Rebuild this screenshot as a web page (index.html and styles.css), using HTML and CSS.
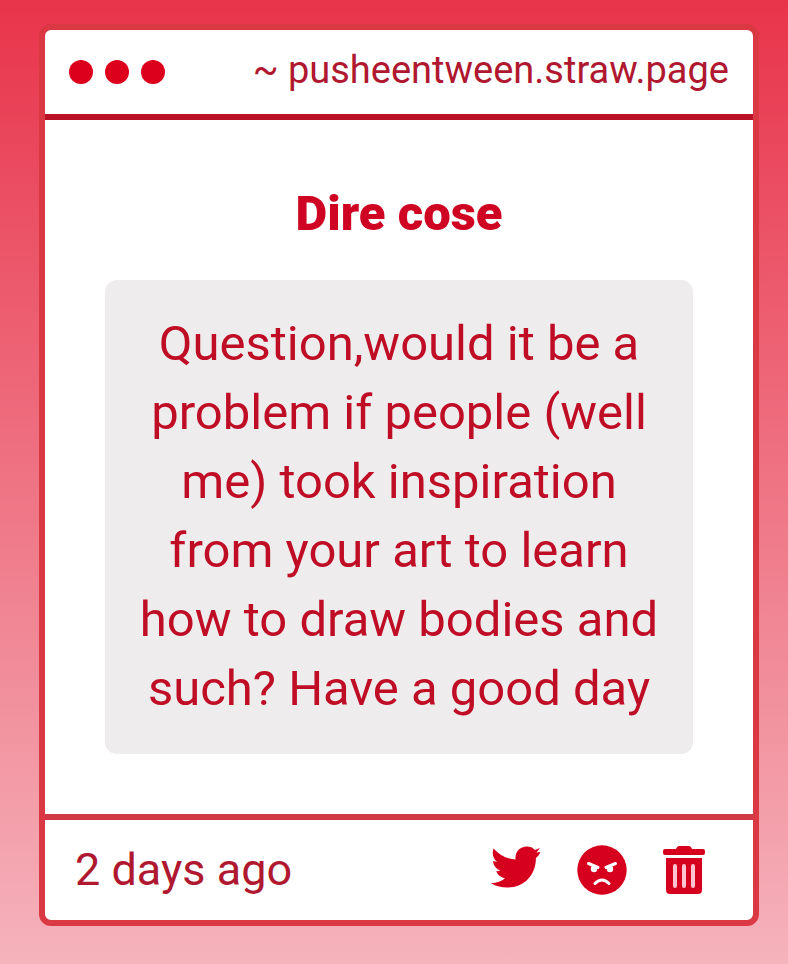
FILE: index.html
```html
<!DOCTYPE html>
<html lang="it">
<head>
    <meta charset="UTF-8">
    <meta name="viewport" content="width=device-width, initial-scale=1.0">
    <title>pusheentween.straw.page</title>
    <link rel="stylesheet" href="styles.css">
</head>
<body>
    <main class="card">
        <header class="topbar">
            <div class="dots"><span></span><span></span><span></span></div>
            <a class="site" href="#">~ pusheentween.straw.page</a>
        </header>
        <section class="content">
            <h1>Dire cose</h1>
            <p class="message">Question,would it be a problem if people (well me) took inspiration from your art to learn how to draw bodies and such? Have a good day</p>
        </section>
        <footer class="bottombar">
            <time>2 days ago</time>
            <div class="actions">
                <button type="button" aria-label="Twitter">
                    <svg viewBox="0 0 50 48" width="50" height="48"><path d="M49.500 6l-4 .5 3.500-4.500-5 2C41.500 1.500 39.500.5 36 .5 28.500.5 24 6 24.500 13.500 15.800 13 8.400 9 2.500 2.500c-1.600 5-.6 9.800 3.600 13.500L2 15c.3 4.600 3.500 8.200 7.500 9.800l-4.300.4c1.500 4 4.800 6.500 8.900 7.100C10.500 35.500 6 37 0 37.200 5 40.300 10.500 41.500 16.500 41.500 33 41.500 45 29 44.900 12c2-1.500 3.500-3.400 4.600-6z"/></svg>
                </button>
                <button type="button" aria-label="Block">
                    <svg viewBox="0 0 50 50" width="50" height="50"><circle cx="25" cy="25" r="24.700"/><path class="face" d="M11.500 18.500l9.500 4M38.500 18.500l-9.500 4M18 38.500q7-7 14 0"/><circle class="eye" cx="17" cy="24" r="3.200"/><circle class="eye" cx="33" cy="24" r="3.200"/></svg>
                </button>
                <button type="button" aria-label="Delete">
                    <svg viewBox="0 0 42 48" width="42" height="48"><path d="M16 0h10q2 0 3 3h11q2 0 2 2v2q0 2-2 2H2Q0 9 0 7V5q0-2 2-2h11q1-3 3-3zM3 12h36v32q0 4-4 4H7q-4 0-4-4z"/><path class="bars" d="M12 20v20M21 20v20M30 20v20"/></svg>
                </button>
            </div>
        </footer>
    </main>
</body>
</html>
```

FILE: styles.css
```css
* {
    box-sizing: border-box;
}
body {
    margin: 0;
    min-height: 100vh;
    padding: 24px 29px 38px 39px;
    background: linear-gradient(#e8344b, #f5b3bc);
    color: #c00d26;
    font-family: Roboto, "Liberation Sans", sans-serif;
}
.card {
    background: #fff;
    border: 6px solid #da3843;
    border-radius: 12px;
}
.topbar {
    display: flex;
    justify-content: space-between;
    align-items: center;
    height: 90px;
    padding: 0 24px;
    border-bottom: 6px solid #b91227;
}
.dots {
    display: flex;
    gap: 12px;
}
.dots span {
    width: 24px;
    height: 24px;
    border-radius: 50%;
    background: #dc001c;
}
.site {
    padding-bottom: 4px;
    color: #b01830;
    font-size: 38px;
    text-decoration: none;
}
.content {
    padding: 60px;
    text-align: center;
}
h1 {
    margin: 0 0 32px;
    color: #cf0322;
    font-size: 49px;
    font-weight: 900;
    line-height: 68px;
}
.message {
    margin: 0;
    padding: 29px 32px 31px;
    border-radius: 12px;
    background: #eeeced;
    font-size: 49px;
    line-height: 69px;
}
.bottombar {
    display: flex;
    justify-content: space-between;
    align-items: center;
    height: 106px;
    padding: 0 48px 0 30px;
    border-top: 6px solid #d23a48;
    color: #b01830;
    font-size: 45px;
}
.bottombar time {
    padding-bottom: 2px;
}
.actions {
    display: flex;
    align-items: center;
    gap: 36px;
}
button {
    display: flex;
    padding: 0;
    border: 0;
    background: none;
    cursor: pointer;
}
svg {
    fill: #d6001e;
}
.face {
    fill: none;
    stroke: #fff;
    stroke-width: 3;
    stroke-linecap: round;
}
.eye {
    fill: #fff;
}
.bars {
    fill: none;
    stroke: #ffc4d0;
    stroke-width: 4;
    stroke-linecap: round;
}
```
